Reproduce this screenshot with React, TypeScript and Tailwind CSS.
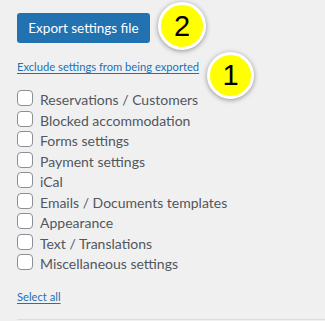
const items = [
  "Reservations / Customers",
  "Blocked accommodation",
  "Forms settings",
  "Payment settings",
  "iCal",
  "Emails / Documents templates",
  "Appearance",
  "Text / Translations",
  "Miscellaneous settings",
];

function Badge({ n, className }: { n: string; className: string }) {
  return (
    <div
      className={`absolute flex items-center justify-center rounded-full bg-[#ffff00] border-[3px] border-white shadow-[0_1px_5px_rgba(0,0,0,0.4)] text-black text-[29px] leading-none font-['Liberation_Sans',Arial,sans-serif] ${className}`}
    >
      {n}
    </div>
  );
}

export default function App() {
  return (
    <div className="relative w-[325px] h-[321px] overflow-hidden bg-[#f0f0f1] font-['Lato',sans-serif]">
      <div className="flex flex-col items-start pl-[17px] pt-[13px]">
        <button className="h-[30px] w-[133px] rounded-[3px] bg-[#2271b1] text-white text-[13.5px] leading-[30px] text-center">
          Export settings file
        </button>
        <a className="mt-[16px] text-[11.2px] leading-[16px] text-[#2271b1] underline underline-offset-[2px] whitespace-nowrap">
          Exclude settings from being exported
        </a>
        <div className="mt-[15px] flex flex-col">
          {items.map((it) => (
            <label key={it} className="flex items-start h-[20.5px]">
              <span className="mt-0 h-[16px] w-[16px] rounded-[4px] border border-[#8c8f94] bg-white shrink-0" />
              <span className="ml-[7px] text-[14px] leading-[20px] text-[#50575e] whitespace-nowrap">{it}</span>
            </label>
          ))}
        </div>
        <a className="mt-[14px] text-[11.2px] leading-[16px] text-[#2271b1] underline underline-offset-[2px]">
          Select all
        </a>
        <div className="mt-[14.5px] h-px w-[310px] bg-[#dcdcde]" />
      </div>
      <Badge n="2" className="left-[158px] top-[2px] w-[48px] h-[48px]" />
      <Badge n="1" className="left-[207px] top-[52px] w-[47px] h-[47px]" />
    </div>
  );
}
